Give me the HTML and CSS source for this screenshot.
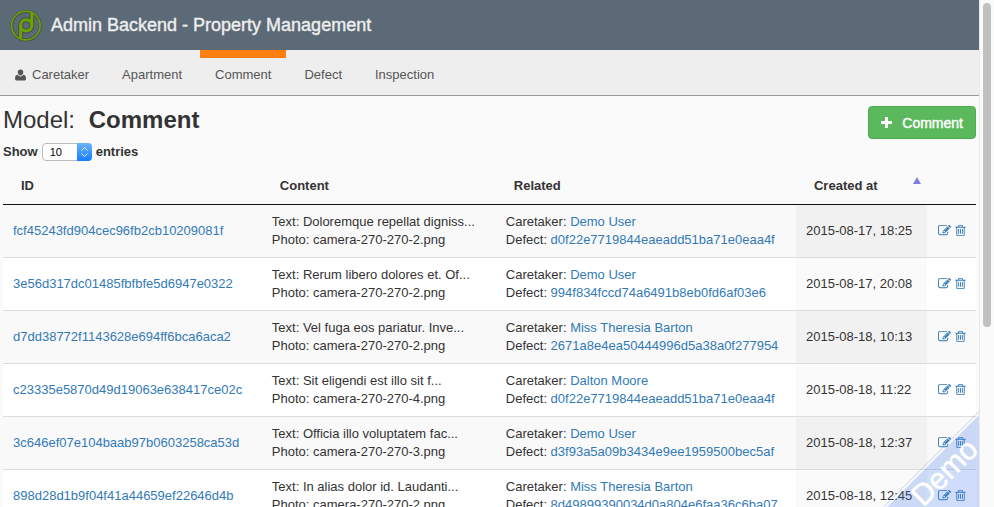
FILE: index.html
```html
<!DOCTYPE html>
<html lang="en">
<head>
<meta charset="utf-8">
<title>Admin Backend - Property Management</title>
<link rel="stylesheet" href="styles.css">
</head>
<body>
<svg class="sprite" aria-hidden="true">
  <symbol id="edit" viewBox="0 0 1792 1792"><path d="M888 1184l116-116-152-152-116 116v56h96v96h56zm440-720q-16-16-33 1l-350 350q-17 17-1 33t33-1l350-350q17-17 1-33zm80 594v190q0 119-84.500 203.500t-203.500 84.500h-832q-119 0-203.500-84.500t-84.500-203.500v-832q0-119 84.500-203.500t203.500-84.500h832q63 0 117 25 15 7 18 23 3 17-9 29l-49 49q-14 14-32 8-23-6-45-6h-832q-66 0-113 47t-47 113v832q0 66 47 113t113 47h832q66 0 113-47t47-113v-126q0-13 9-22l64-64q15-15 35-7t20 29zm-96-738l288 288-672 672h-288v-288zm444 132l-92 92-288-288 92-92q28-28 68-28t68 28l152 152q28 28 28 68t-28 68z"/></symbol>
  <symbol id="trash" viewBox="0 0 1792 1792"><path d="M704 736v576q0 14-9 23t-23 9h-64q-14 0-23-9t-9-23v-576q0-14 9-23t23-9h64q14 0 23 9t9 23zm256 0v576q0 14-9 23t-23 9h-64q-14 0-23-9t-9-23v-576q0-14 9-23t23-9h64q14 0 23 9t9 23zm256 0v576q0 14-9 23t-23 9h-64q-14 0-23-9t-9-23v-576q0-14 9-23t23-9h64q14 0 23 9t9 23zm128 724v-948h-896v948q0 22 7 40.500t14.500 27 10.500 8.500h832q3 0 10.500-8.500t14.500-27 7-40.500zm-672-1076h448l-48-117q-7-9-17-11h-317q-10 2-17 11zm928 32v64q0 14-9 23t-23 9h-96v948q0 83-47 143.500t-113 60.500h-832q-66 0-113-58.500t-47-141.500v-952h-96q-14 0-23-9t-9-23v-64q0-14 9-23t23-9h309l70-167q15-37 54-63t79-26h320q40 0 79 26t54 63l70 167h309q14 0 23 9t9 23z"/></symbol>
</svg>
<div class="window">
<div class="page">
  <header class="topbar">
    <svg class="logo" viewBox="0 0 34 34" aria-hidden="true">
      <g fill="none" stroke="#475248" stroke-width="3"><circle cx="17" cy="17.800" r="14.200"/><path stroke-width="5" d="M11.600 17.400v12.600M22.800 17.400V5"/><circle cx="17.200" cy="17.400" r="5.600" stroke-width="5"/></g>
      <g fill="none" stroke="#6ba300"><circle cx="16.800" cy="17.600" r="14.300" stroke-width="1.600"/><circle cx="17.200" cy="17.400" r="5.600" stroke-width="3"/><path d="M11.600 17.400v12.600M22.800 17.400V5" stroke-width="3"/></g>
    </svg>
    <span class="brand">Admin Backend - Property Management</span>
  </header>
  <nav class="nav">
    <a href="#"><svg class="user" viewBox="0 0 12 12" aria-hidden="true"><path d="M6 0a3 3 0 0 1 3 3c0 2-1.300 3.600-3 3.600S3 5 3 3a3 3 0 0 1 3-3zM3 5.800C3.800 7 4.800 7.600 6 7.600S8.200 7 9 5.800c2 .2 3 1.600 3 4.200 0 1.200-.8 2-2 2H2c-1.200 0-2-.8-2-2 0-2.600 1-4 3-4.200z"/></svg>Caretaker</a>
    <a href="#">Apartment</a>
    <a href="#" class="active" aria-current="page">Comment</a>
    <a href="#">Defect</a>
    <a href="#">Inspection</a>
  </nav>
  <main>
    <div class="heading">
      <h1>Model: <strong>Comment</strong></h1>
      <button type="button" class="add"><svg viewBox="0 0 11 11" aria-hidden="true"><path d="M4 0h3v4h4v3H7v4H4V7H0V4h4z"/></svg>Comment</button>
    </div>
    <div class="length">
      <label for="entries">Show</label>
      <span class="picker">
        <select id="entries"><option>10</option><option>25</option><option>50</option></select>
        <svg viewBox="0 0 15 18" aria-hidden="true"><path d="M4.500 7.500l3-3 3 3M4.500 10.500l3 3 3-3"/></svg>
      </span>
      <label for="entries">entries</label>
    </div>
    <table>
      <colgroup><col class="c-id"><col class="c-content"><col class="c-related"><col class="c-created"><col class="c-actions"></colgroup>
      <thead><tr><th>ID</th><th>Content</th><th>Related</th><th aria-sort="ascending"><span class="sorted">Created at</span></th><td></td></tr></thead>
      <tbody>
        <tr><td><a href="#">fcf45243fd904cec96fb2cb10209081f</a></td><td>Text: Doloremque repellat digniss...<br>Photo: camera-270-270-2.png</td><td>Caretaker: <a href="#">Demo User</a><br>Defect: <a href="#">d0f22e7719844eaeadd51ba71e0eaa4f</a></td><td>2015-08-17, 18:25</td><td><span class="actions"><a href="#" aria-label="Edit"><svg><use href="#edit"/></svg></a><a href="#" aria-label="Delete"><svg><use href="#trash"/></svg></a></span></td></tr>
        <tr><td><a href="#">3e56d317dc01485fbfbfe5d6947e0322</a></td><td>Text: Rerum libero dolores et. Of...<br>Photo: camera-270-270-2.png</td><td>Caretaker: <a href="#">Demo User</a><br>Defect: <a href="#">994f834fccd74a6491b8eb0fd6af03e6</a></td><td>2015-08-17, 20:08</td><td><span class="actions"><a href="#" aria-label="Edit"><svg><use href="#edit"/></svg></a><a href="#" aria-label="Delete"><svg><use href="#trash"/></svg></a></span></td></tr>
        <tr><td><a href="#">d7dd38772f1143628e694ff6bca6aca2</a></td><td>Text: Vel fuga eos pariatur. Inve...<br>Photo: camera-270-270-2.png</td><td>Caretaker: <a href="#">Miss Theresia Barton</a><br>Defect: <a href="#">2671a8e4ea50444996d5a38a0f277954</a></td><td>2015-08-18, 10:13</td><td><span class="actions"><a href="#" aria-label="Edit"><svg><use href="#edit"/></svg></a><a href="#" aria-label="Delete"><svg><use href="#trash"/></svg></a></span></td></tr>
        <tr><td><a href="#">c23335e5870d49d19063e638417ce02c</a></td><td>Text: Sit eligendi est illo sit f...<br>Photo: camera-270-270-4.png</td><td>Caretaker: <a href="#">Dalton Moore</a><br>Defect: <a href="#">d0f22e7719844eaeadd51ba71e0eaa4f</a></td><td>2015-08-18, 11:22</td><td><span class="actions"><a href="#" aria-label="Edit"><svg><use href="#edit"/></svg></a><a href="#" aria-label="Delete"><svg><use href="#trash"/></svg></a></span></td></tr>
        <tr><td><a href="#">3c646ef07e104baab97b0603258ca53d</a></td><td>Text: Officia illo voluptatem fac...<br>Photo: camera-270-270-3.png</td><td>Caretaker: <a href="#">Demo User</a><br>Defect: <a href="#">d3f93a5a09b3434e9ee1959500bec5af</a></td><td>2015-08-18, 12:37</td><td><span class="actions"><a href="#" aria-label="Edit"><svg><use href="#edit"/></svg></a><a href="#" aria-label="Delete"><svg><use href="#trash"/></svg></a></span></td></tr>
        <tr><td><a href="#">898d28d1b9f04f41a44659ef22646d4b</a></td><td>Text: In alias dolor id. Laudanti...<br>Photo: camera-270-270-2.png</td><td>Caretaker: <a href="#">Miss Theresia Barton</a><br>Defect: <a href="#">8d49899390034d0a804e6faa36c6ba07</a></td><td>2015-08-18, 12:45</td><td><span class="actions"><a href="#" aria-label="Edit"><svg><use href="#edit"/></svg></a><a href="#" aria-label="Delete"><svg><use href="#trash"/></svg></a></span></td></tr>
      </tbody>
    </table>
  </main>
  <div class="ribbon"><span>Demo</span></div>
</div>
<div class="scrollbar"><div class="thumb"></div></div>
</div>
</body>
</html>
```
FILE: styles.css
```css
* { box-sizing: border-box; }
body {
  margin: 0;
  background: #fafafa;
  color: #333;
  font: 13px/18px "Liberation Sans", Arial, sans-serif;
}
a { color: #337ab7; text-decoration: none; }
.sprite { display: none; }

.window { display: flex; height: 100vh; overflow: hidden; }
.page { position: relative; flex: 1; min-width: 0; overflow: hidden; }
.scrollbar { width: 15px; padding: 3px; border-left: 1px solid #e8e8e8; background: #fafafa; }
.thumb { width: 8px; height: 64vh; border-radius: 4px; background: #c1c1bf; }

.topbar {
  display: flex;
  align-items: center;
  gap: 8px;
  height: 50px;
  padding: 0 9px;
  background: #5b6a76;
}
.logo { width: 34px; height: 34px; }
.brand { color: #eee; font-size: 18px; line-height: 24px; -webkit-text-stroke: 0.4px #eee; }

.nav { display: flex; background: #eee; border-bottom: 1px solid #999; }
.nav a {
  display: flex;
  align-items: center;
  padding: 8px 15px 11px;
  border-top: 8px solid transparent;
  margin-right: 3px;
  color: #555;
}
.nav .active { border-top-color: #ff7f0e; }
.user { width: 11px; height: 12px; margin-right: 6px; fill: #555; }

main { padding: 10px 3px 0; }
.heading { display: flex; justify-content: space-between; align-items: flex-start; }
h1 { margin: 0; font-size: 24px; line-height: 28px; font-weight: 400; }
h1 strong { margin-left: 7px; }
.add {
  display: flex;
  align-items: center;
  gap: 10px;
  height: 33px;
  padding: 0 12px;
  border: 1px solid #4cae4c;
  border-radius: 4px;
  background: #5cb85c;
  color: #fff;
  font: 14px/20px "Liberation Sans", Arial, sans-serif;
  -webkit-text-stroke: 0.4px #fff;
}
.add svg { width: 11px; height: 11px; fill: #fff; }

.length { display: flex; align-items: center; gap: 4px; height: 26px; font-weight: 700; }
.picker { position: relative; display: flex; }
.picker select {
  appearance: none;
  width: 50px;
  height: 18px;
  padding: 0 7px;
  border: 1px solid #bbb;
  border-radius: 4px;
  background: #fff;
  color: #000;
  font: 11px/14px "Liberation Sans", Arial, sans-serif;
}
.picker svg {
  position: absolute;
  right: 0;
  top: 0;
  width: 15px;
  height: 18px;
  border-radius: 0 4px 4px 0;
  background: linear-gradient(#6bb3fa, #127dff);
  fill: none;
  stroke: #fff;
  pointer-events: none;
}

table { width: 100%; table-layout: fixed; border-collapse: separate; border-spacing: 0; }
.c-id { width: 26.600%; }
.c-content { width: 24.050%; }
.c-related { width: 30.850%; }
.c-created { width: 13.450%; }
.c-actions { width: 5.050%; }
th { padding: 12px 18px 9px; text-align: left; }
th, thead td { border-bottom: 1px solid #111; }
.sorted { display: flex; justify-content: space-between; margin-right: -12px; }
.sorted::after {
  content: "";
  width: 0;
  height: 0;
  border: 4px solid transparent;
  border-top: 0;
  border-bottom: 7px solid #7f7fe3;
}
tbody td { padding: 8px 10px; border-top: 1px solid #ddd; background: #fff; white-space: nowrap; }
tbody tr:first-child td { border-top: 0; }
tbody tr:nth-child(odd) td { background: #f9f9f9; }
tbody td:nth-child(4) { background: #fafafa; }
tbody tr:nth-child(odd) td:nth-child(4) { background: #f1f1f1; }
tbody td:last-child { padding: 8px 0 10px 11px; }
.actions { display: flex; gap: 3px; }
.actions a { display: flex; }
.actions svg { width: 13px; height: 13px; fill: #337ab7; }

.ribbon {
  position: absolute;
  right: -100px;
  bottom: 0;
  width: 200px;
  height: 65px;
  transform: rotate(-45deg);
  transform-origin: bottom center;
  background: rgba(65, 120, 235, 0.250);
  outline: 1px solid rgba(65, 120, 235, 0.200);
  outline-offset: 2px;
  color: #fff;
  text-align: center;
  font-size: 30px;
  line-height: 32px;
  -webkit-text-stroke: 0.5px #fff;
  pointer-events: none;
}
```
